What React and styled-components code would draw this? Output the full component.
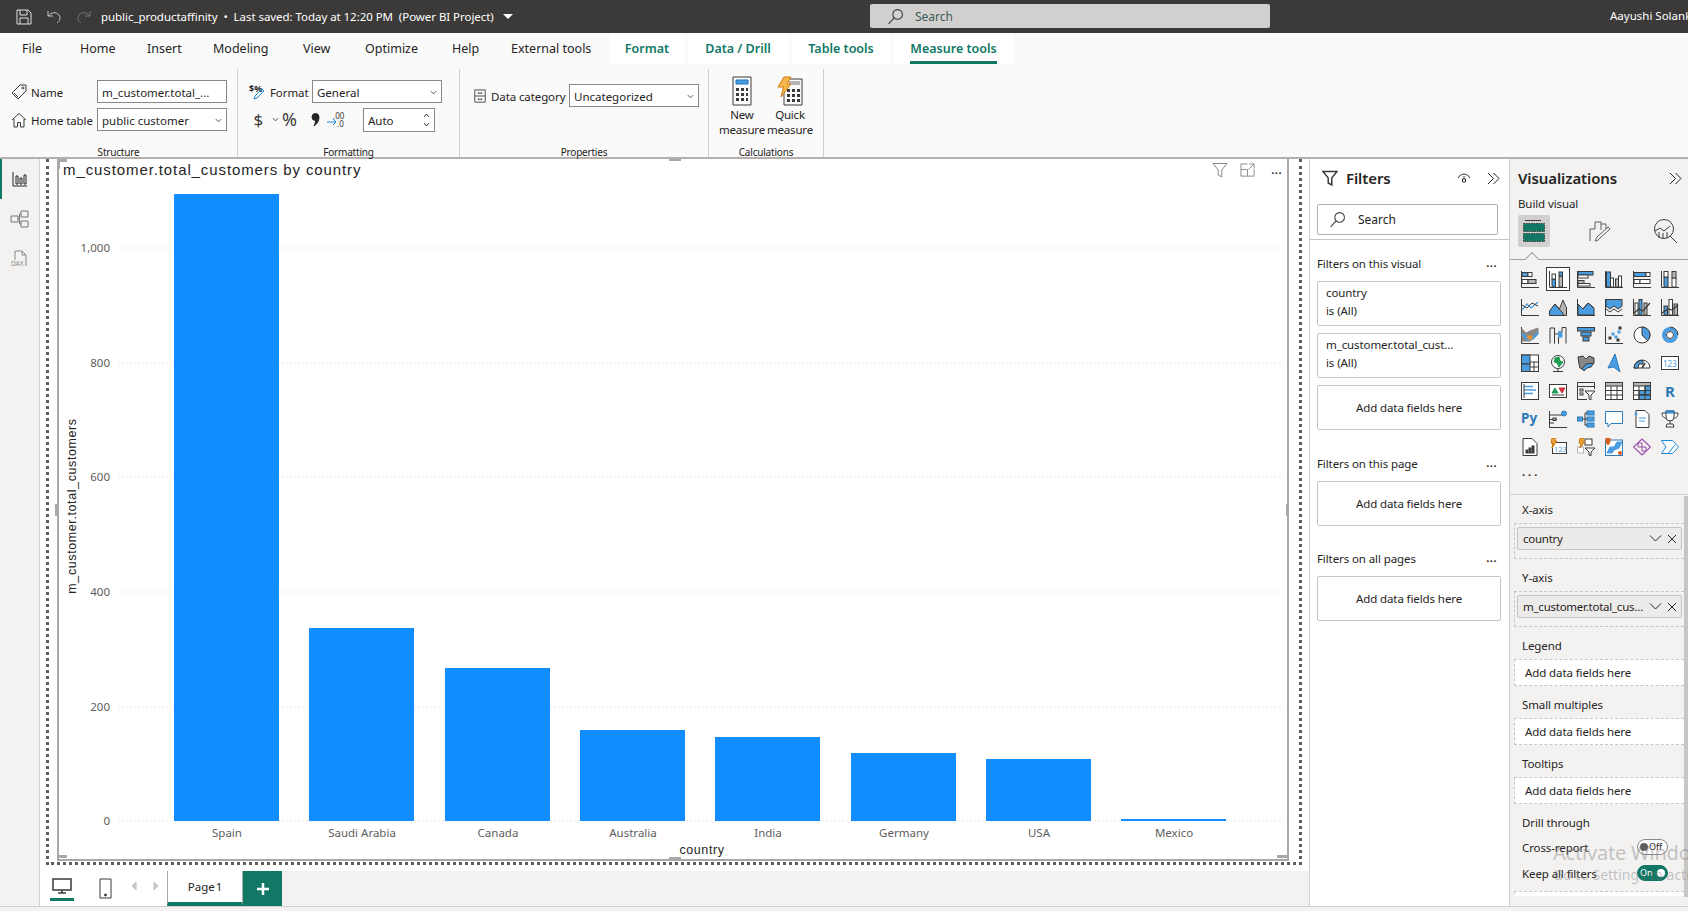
import React from 'react';
import styled, { createGlobalStyle } from 'styled-components';

const B = '#4a9de0';
const G = '#b8b6b4';
const D = '#3b3a39';
const GREEN = '#117865';
const FONT = '"Noto Sans", "Open Sans", sans-serif';

const GlobalStyle = createGlobalStyle`
  html, body { margin: 0; padding: 0; background: #fff; }
  * { box-sizing: border-box; }
  body { font-family: ${FONT}; font-size: 12px; color: #252423; }
`;

const Page = styled.div`
  position: relative;
  width: 1688px;
  height: 911px;
  overflow: hidden;
  display: flex;
  flex-direction: column;
`;

const TopBar = styled.div`
  height: 33px;
  flex: none;
  background: #3b3a39;
  color: #fff;
  display: flex;
  align-items: center;
  position: relative;
`;
const TopIcon = styled.span`
  display: flex;
  width: ${(p) => p.$w}px;
  padding-left: ${(p) => p.$pl}px;
`;
const DocTitle = styled.span`
  font-size: 11.5px;
  white-space: pre;
  letter-spacing: -0.05px;
`;
const Caret = styled.span`
  width: 0;
  height: 0;
  margin-left: 9px;
  border: 5px solid transparent;
  border-top-color: #fff;
  border-bottom-width: 0;
`;
const TopSearch = styled.div`
  position: absolute;
  left: 870px;
  top: 4px;
  width: 400px;
  height: 24px;
  border-radius: 2px;
  background: #d2d0ce;
  color: #3b5b55;
  display: flex;
  align-items: center;
  gap: 11px;
  padding-left: 17px;
`;
const UserName = styled.span`
  position: absolute;
  left: 1610px;
  top: 8px;
  font-size: 11.5px;
  white-space: nowrap;
`;

const TabsRow = styled.div`
  height: 31px;
  flex: none;
  background: #fafafa;
  display: flex;
  padding-left: 22px;
`;
const Tab = styled.div`
  width: ${(p) => p.$w}px;
  font-size: 12.5px;
  line-height: 31px;
  white-space: nowrap;
`;
const ContextTab = styled.div`
  width: ${(p) => p.$w}px;
  margin-right: 4px;
  height: 31px;
  background: #fff;
  color: ${GREEN};
  font-size: 12.5px;
  font-weight: 600;
  line-height: 31px;
  text-align: center;
  white-space: nowrap;
`;
const ActiveLabel = styled.span`
  display: inline-block;
  height: 31px;
  border-bottom: ${(p) => (p.$on ? `3px solid ${GREEN}` : 'none')};
`;

const Ribbon = styled.div`
  height: 95px;
  flex: none;
  background: #fafafa;
  border-bottom: 2px solid #b3b0ad;
  display: flex;
  padding-top: 5px;
`;
const Group = styled.div`
  width: ${(p) => p.$w}px;
  height: 88px;
  border-right: 1px solid #d2d0ce;
  display: flex;
  flex-direction: column;
`;
const GroupBody = styled.div`
  height: 78px;
  padding: ${(p) => p.$pad};
  display: flex;
  flex-direction: column;
  gap: 5px;
`;
const GroupLabel = styled.div`
  height: 10px;
  line-height: 10px;
  font-size: 10px;
  letter-spacing: -0.2px;
  text-align: center;
`;
const RibbonRow = styled.div`
  display: flex;
  align-items: center;
  height: ${(p) => p.$h || 23}px;
`;
const RowLabel = styled.span`
  width: ${(p) => p.$w}px;
  padding-top: 1px;
  font-size: 11.5px;
  letter-spacing: -0.1px;
  white-space: nowrap;
`;
const RowIcon = styled.span`
  display: flex;
  width: ${(p) => p.$w}px;
`;
const Field = styled.div`
  width: ${(p) => p.$w}px;
  height: ${(p) => p.$h || 23}px;
  background: #fff;
  border: 1px solid #8a8886;
  padding: 1px 4px 0;
  font-size: 11.5px;
  display: flex;
  align-items: center;
  justify-content: space-between;
  white-space: nowrap;
`;
const FormatGlyph = styled.span`
  width: ${(p) => p.$w}px;
  font-size: ${(p) => p.$size}px;
  color: #3b3a39;
  line-height: 23px;
`;
const CalcButton = styled.div`
  width: 48px;
  display: flex;
  flex-direction: column;
  align-items: center;
  font-size: 11.5px;
  line-height: 15px;
  letter-spacing: -0.2px;
  text-align: center;
`;
const CalcIcon = styled.span`
  display: flex;
  height: 30px;
  margin-bottom: 1px;
`;
const CalcRow = styled.div`
  display: flex;
  margin-left: 9px;
`;

const Main = styled.div`
  flex: 1;
  display: flex;
  min-height: 0;
`;
const Rail = styled.div`
  width: 40px;
  flex: none;
  background: #f3f2f1;
  border-right: 1px solid #d2d0ce;
  display: flex;
  flex-direction: column;
`;
const RailItem = styled.div`
  height: 40px;
  display: flex;
  align-items: center;
  justify-content: center;
  border-left: 2px solid ${(p) => (p.$on ? GREEN : 'transparent')};
  padding-right: 2px;
`;
const Center = styled.div`
  width: 1269px;
  flex: none;
  display: flex;
  flex-direction: column;
  background: #fff;
`;
const Canvas = styled.div`
  height: 712px;
  padding: 0 0 0 6px;
`;
const DottedFrame = styled.div`
  width: 1256px;
  height: 706px;
  border-left: 3px dotted #605e5c;
  border-right: 3px dotted #605e5c;
  border-bottom: 3px dotted #605e5c;
  padding-left: 8px;
`;
const Visual = styled.div`
  position: relative;
  width: 1232px;
  height: 702px;
  border-left: 2px solid #a8a8a8;
  border-right: 2px solid #a8a8a8;
  border-bottom: 2px solid #a8a8a8;
`;
const Chart = styled.svg`
  display: block;
  width: 1228px;
  height: 700px;
`;
const AxisText = styled.text`
  font-family: ${FONT};
  font-size: 11.5px;
  fill: #605e5c;
`;
const AxisTitle = styled.text`
  font-family: "Liberation Sans", sans-serif;
  font-size: 12.5px;
  letter-spacing: 0.6px;
  fill: #252423;
`;
const ChartTitle = styled.text`
  font-family: "Liberation Sans", sans-serif;
  font-size: 15px;
  letter-spacing: 0.9px;
  fill: #252423;
`;
const VisualActions = styled.div`
  position: absolute;
  top: 3px;
  right: 5px;
  display: flex;
  align-items: center;
  gap: 12px;
`;
const ActionDots = styled.span`
  margin-left: 4px;
  font-weight: 700;
  font-size: 11px;
  letter-spacing: 0.5px;
  line-height: 8px;
`;
const Handle = styled.span`
  position: absolute;
  background: #a8a8a8;
  left: ${(p) => p.$l}px;
  top: ${(p) => p.$t}px;
  width: ${(p) => p.$w}px;
  height: ${(p) => p.$h}px;
`;

const PageBar = styled.div`
  height: 35px;
  display: flex;
`;
const ViewSwitch = styled.div`
  width: 127px;
  display: flex;
  align-items: flex-start;
  padding: 5px 0 0 10px;
  position: relative;
  background: #fff;
`;
const ViewItem = styled.div`
  width: ${(p) => p.$w}px;
  height: 25px;
  display: flex;
  justify-content: ${(p) => (p.$center ? 'center' : 'flex-start')};
  border-bottom: ${(p) => (p.$on ? `3px solid ${GREEN}` : 'none')};
  padding-top: 2px;
  margin-right: ${(p) => p.$mr || 0}px;
`;
const PageTabs = styled.div`
  flex: 1;
  display: flex;
  background: #f3f2f1;
`;
const PageTab = styled.div`
  width: 76px;
  background: #fff;
  border-left: 1px solid #a8a8a8;
  border-right: 1px solid #a8a8a8;
  border-bottom: 4px solid ${GREEN};
  text-align: center;
  line-height: 32px;
  font-size: 11.5px;
  word-spacing: -2px;
`;
const AddTab = styled.div`
  width: 39px;
  background: ${GREEN};
  color: #fff;
  display: flex;
  align-items: center;
  justify-content: center;
`;

const FiltersPane = styled.div`
  width: 200px;
  flex: none;
  background: #fff;
  border-left: 1px solid #d2d0ce;
  display: flex;
  flex-direction: column;
`;
const PaneHeader = styled.div`
  height: 38px;
  flex: none;
  display: flex;
  align-items: center;
  padding: ${(p) => p.$pad};
`;
const PaneTitle = styled.span`
  flex: 1;
  margin-left: ${(p) => p.$ml || 0}px;
  font-size: 15px;
  font-weight: 600;
  letter-spacing: -0.1px;
  color: #252423;
`;
const HeaderGap = styled.span`
  width: 16px;
`;
const SearchBox = styled.div`
  margin: 7px 0 0 7px;
  width: 181px;
  height: 31px;
  border: 1px solid #b3b0ad;
  border-radius: 2px;
  display: flex;
  align-items: center;
  gap: 12px;
  padding-left: 11px;
  font-size: 12px;
`;
const PaneRule = styled.div`
  height: 1px;
  flex: none;
  margin-top: ${(p) => p.$mt}px;
  background: #c8c6c4;
`;
const FilterSection = styled.div`
  margin: ${(p) => p.$mt}px 7px 0;
  display: flex;
  flex-direction: column;
  gap: 7px;
`;
const SectionHead = styled.div`
  height: 16px;
  margin-bottom: 3px;
  display: flex;
  align-items: center;
  justify-content: space-between;
  font-size: 11.5px;
  letter-spacing: -0.1px;
  padding-right: 5px;
`;
const Dots = styled.span`
  font-weight: 700;
  font-size: 11px;
  letter-spacing: ${(p) => p.$spread || 0.5}px;
  line-height: 8px;
`;
const FilterCard = styled.div`
  width: 184px;
  height: 45px;
  border: 1px solid #c8c6c4;
  border-radius: 2px;
  padding: ${(p) => (p.$center ? '0' : '2px')} 8px;
  font-size: 11.5px;
  line-height: 18px;
  letter-spacing: -0.1px;
  display: flex;
  flex-direction: column;
  justify-content: ${(p) => (p.$center ? 'center' : 'flex-start')};
  text-align: ${(p) => (p.$center ? 'center' : 'left')};
`;

const VizPane = styled.div`
  flex: 1;
  min-width: 0;
  background: #f3f2f1;
  border-left: 1px solid #d2d0ce;
  display: flex;
  flex-direction: column;
  overflow: hidden;
`;
const BuildLabel = styled.div`
  height: 15px;
  margin: -1px 0 0 8px;
  line-height: 15px;
  font-size: 11.5px;
  letter-spacing: -0.1px;
`;
const BuildTabs = styled.div`
  height: 32px;
  margin: 4px 0 0 8px;
  display: flex;
  gap: 34px;
`;
const BuildTab = styled.div`
  width: 32px;
  height: 32px;
  display: flex;
  align-items: center;
  justify-content: center;
  border-radius: 2px;
  background: ${(p) => (p.$on ? '#d2d0ce' : 'transparent')};
`;
const NotchRule = styled.div`
  position: relative;
  height: 1px;
  margin-top: 12px;
  background: #a19f9d;
`;
const Notch = styled.span`
  position: absolute;
  left: 17px;
  top: -5px;
  width: 10px;
  height: 10px;
  background: #f3f2f1;
  border-left: 1px solid #a19f9d;
  border-top: 1px solid #a19f9d;
  transform: rotate(45deg);
`;
const VizGrid = styled.div`
  margin: 10px 0 0 11px;
  display: grid;
  grid-template-columns: repeat(6, 18px);
  grid-auto-rows: 18px;
  gap: 10px;
`;
const VizCell = styled.div`
  position: relative;
  display: flex;
  ${(p) => p.$on && `
    &::before {
      content: '';
      position: absolute;
      inset: -3px;
      border: 1px solid #3b3a39;
      background: #fff;
    }
    & > svg { position: relative; }
  `}
`;
const MoreRow = styled.div`
  height: 12px;
  margin: 10px 0 0 12px;
  display: flex;
  align-items: center;
  color: #252423;
`;
const Well = styled.div`
  margin-top: 16px;
  flex: 1;
  min-height: 0;
  display: flex;
  align-items: flex-start;
  border-top: 1px solid #d2d0ce;
`;
const WellBody = styled.div`
  flex: 1;
  min-width: 0;
  height: 401px;
  padding-top: 7px;
  overflow: hidden;
`;
const ScrollThumb = styled.div`
  width: 4px;
  height: 401px;
  margin-top: 1px;
  background: #c8c6c4;
`;
const FieldLabel = styled.div`
  height: 16px;
  line-height: 16px;
  margin: ${(p) => p.$mt || 0}px 0 0 12px;
  font-size: 11.5px;
  letter-spacing: -0.1px;
`;
const DropZone = styled.div`
  margin: ${(p) => (p.$mt === undefined ? 5 : p.$mt)}px 0 0 4px;
  height: ${(p) => (p.$filled ? 36 : 27)}px;
  border: 1px dashed #c8c6c4;
  border-right: none;
  background: ${(p) => (p.$filled ? 'transparent' : '#fff')};
  padding: ${(p) => (p.$filled ? '3px 2px' : '0 0 0 10px')};
  font-size: 11.5px;
  letter-spacing: -0.1px;
  line-height: 25px;
`;
const Pill = styled.div`
  height: 23px;
  background: #edebe9;
  border: 1px solid #c8c6c4;
  border-radius: 2px;
  display: flex;
  align-items: center;
  padding: 0 4px 0 5px;
  gap: 5px;
`;
const PillText = styled.span`
  flex: 1;
  min-width: 0;
  letter-spacing: -0.25px;
  overflow: hidden;
  text-overflow: ellipsis;
  white-space: nowrap;
`;
const SwitchRow = styled.div`
  height: 16px;
  margin: ${(p) => p.$mt}px 4px 0 12px;
  display: flex;
  align-items: center;
  justify-content: space-between;
  font-size: 11.5px;
  letter-spacing: -0.1px;
  padding-right: 12px;
`;
const Toggle = styled.div`
  width: 31px;
  height: 16px;
  border-radius: 8px;
  background: ${(p) => (p.$on ? GREEN : '#fff')};
  border: 1px solid ${(p) => (p.$on ? GREEN : '#8a8886')};
  color: ${(p) => (p.$on ? '#fff' : '#252423')};
  display: flex;
  align-items: center;
  justify-content: ${(p) => (p.$on ? 'space-between' : 'flex-start')};
  gap: 1px;
  padding: 0 2px;
  font-size: 9px;
  line-height: 10px;
`;
const Knob = styled.span`
  width: 8px;
  height: 8px;
  border-radius: 50%;
  flex: none;
  background: ${(p) => (p.$on ? '#fff' : '#605e5c')};
`;

const Status = styled.div`
  height: 5px;
  flex: none;
  background: #f3f2f1;
  border-top: 1px solid #d2d0ce;
`;
const Watermark = styled.div`
  position: absolute;
  left: 1553px;
  top: 840px;
  color: rgba(110, 110, 110, 0.38);
  white-space: nowrap;
  pointer-events: none;
`;
const WatermarkBig = styled.div`
  font-size: 20px;
  letter-spacing: -0.2px;
  line-height: 26px;
`;
const WatermarkSmall = styled.div`
  font-size: 14px;
  line-height: 18px;
`;

// small svg helper, every icon shares a stroke
const Svg = ({ s = 16, w, h, box = '0 0 16 16', c = '#3b3a39', sw = 1, children }) => (
  <svg width={w || s} height={h || s} viewBox={box} fill="none" stroke={c} strokeWidth={sw}>
    {children}
  </svg>
);

const SearchGlass = ({ c }) => (
  <Svg c={c} s={17}>
    <circle cx="10" cy="6" r="4.5" />
    <path d="M6.8 9.2 1.5 15" />
  </Svg>
);
const Funnel = ({ s = 16, c = '#3b3a39', sw = 1 }) => (
  <Svg s={s} c={c} sw={sw}>
    <path d="M1 1.5h14l-5.2 6.4V15l-3.6-2V7.9z" />
  </Svg>
);
const DoubleChevron = () => (
  <Svg s={13} box="0 0 13 13" c="#252423">
    <path d="M1 1l5.5 5.5L1 12M6.5 1 12 6.5 6.5 12" />
  </Svg>
);
const Chevron = ({ s = 7 }) => (
  <Svg s={s} box="0 0 8 8" c="#3b3a39">
    <path d="M1 2.5 4 5.5 7 2.5" />
  </Svg>
);
const Cross = () => (
  <Svg s={10} box="0 0 10 10" c="#252423">
    <path d="M1 1l8 8M9 1 1 9" />
  </Svg>
);
const DownLong = () => (
  <Svg s={13} box="0 0 13 13" c="#252423">
    <path d="M1 3.5 6.5 9 12 3.5" />
  </Svg>
);

const r = (x, y, w, h, f = B, s = D) => <rect x={x} y={y} width={w} height={h} fill={f} stroke={s} />;
const p = (d, f = 'none', s = D, w = 1) => <path d={d} fill={f} stroke={s} strokeWidth={w} />;
const AX = p('M.5 1V17.5H18');

const VIZ_ICONS = [
  <>{AX}{r(1, 2.5, 6, 4)}{r(7, 2.5, 4, 4, '#fff')}{r(1, 9.5, 6, 4, '#fff')}{r(7, 9.5, 8, 4, G)}</>,
  <>{AX}{r(3, 9, 3.5, 8)}{r(3, 4, 3.5, 5, '#fff')}{r(10, 6, 3.5, 11, G)}{r(10, 2, 3.5, 4, B)}</>,
  <>{AX}{r(1, 1.5, 15, 3.5, B)}{r(1, 5, 10, 3, '#fff')}{r(1, 10.5, 6, 3, G)}{r(1, 13.5, 12, 2.5, '#fff')}</>,
  <>{AX}{r(1.5, 2, 4, 15, B)}{r(5.5, 8, 3, 9, '#fff')}{r(10.5, 9, 3, 8, G)}{r(13.5, 6, 3, 11, '#fff')}</>,
  <>{AX}{r(1, 2.5, 12, 4)}{r(13, 2.5, 4, 4, '#fff')}{r(1, 9.5, 6, 4, '#fff')}{r(7, 9.5, 10, 4, '#fff')}</>,
  <>{AX}{r(3, 7, 4, 10)}{r(3, 1.5, 4, 5.5, '#fff')}{r(11, 8, 4, 9, '#fff')}{r(11, 1.5, 4, 6.5, G)}</>,
  <>{AX}{p('M1 12 6 6l4 4 7-6', 'none', B, 1.2)}{p('M1 7l5 3 5-5 6 3')}</>,
  <>{p('M1 17.5 1 13 6 6l4 6 4-10 3.5 8v7.5z', G)}{p('M.5 17.5V13L6 6l5 6 3 3v2.5z', B)}{p('M6 6l5 6', 'none')}</>,
  <>{AX}{p('M1 17V6l5 5 5-6 6 5v7z', B)}{p('M1 6l5 5 5-6 6 5', 'none', D)}</>,
  <>{AX}{p('M1 1.5h16V8l-4 3-4-3-4 3-4-3z', B)}{p('M1 11l4 3 4-3 4 3 4-3', 'none', D)}</>,
  <>{AX}{r(2, 5, 3, 12, '#fff')}{r(6, 1.5, 3, 15.5, B)}{r(11, 5, 3, 12, G)}{p('M1 15l5-4 4 2 7-8', 'none', D, 1.2)}</>,
  <>{AX}{r(3, 8, 3.5, 9, B)}{r(8, 1.5, 3.5, 15.5, '#fff')}{r(13, 6, 3.5, 11, G)}{p('M1 15l6-4 4 1 6-5', 'none', D, 1.2)}</>,
  <>{AX}{p('M1 3l4 4 4-2 8-3v6l-8 7H1z', '#8a8886', '#8a8886')}{p('M1 8l5 5h5l6-6', 'none', B, 2.5)}{r(7, 10, 4, 3, '#e8912d', '#e8912d')}</>,
  <>{p('M1 17.5V2h4.5v15.5M5.5 17.5V8h4v9.5M9.5 17.5V6h3.5V1.5h4v16')}{r(9.5, 6, 3.5, 5, B, B)}</>,
  <>{r(.5, 1.5, 17, 3.5, B)}{r(4, 6, 10, 4, B)}{r(6, 11, 6, 4, B)}</>,
  <>{AX}{r(4, 11, 2, 2, D, D)}{r(7, 7, 2, 2, B, B)}{r(10, 10, 2, 2, B, B)}{r(13, 5, 2, 2, B, B)}{r(14, 1, 2, 2, D, D)}{r(12, 13, 2, 2, D, D)}</>,
  <><circle cx="9" cy="9" r="8" fill="#fff" stroke={D} />{p('M9 1a8 8 0 0 1 8 8 8 8 0 0 1-2.5 5.8L9 9z', B)}</>,
  <><circle cx="9" cy="9" r="6" fill="none" stroke={B} strokeWidth="4" />{p('M9 1a8 8 0 0 1 8 8', 'none', D)}<circle cx="9" cy="9" r="3.5" fill="#fff" stroke={D} /></>,
  <>{r(.5, 1, 17, 16.5, '#fff')}{r(.5, 1, 8.5, 9, B)}{r(.5, 10, 8.5, 7.5, B)}{p('M9 8h8.5M13 8v9.5M9 13h8.5')}</>,
  <><circle cx="9" cy="8" r="6.5" fill="#fff" stroke={D} />{p('M6 4l4-1 1 4 3 1-4 5-2-4-3-1z', '#1f9d55', '#1f9d55')}{p('M4 17.5h10M9 15v2')}</>,
  <>{p('M1 3l5-1 3 3 3-3 5 2v5l-3 3-4 1-3 3-4-2-1-4z', '#8a8886')}{p('M9 10l8-1-3 4-4 1-3 3-2-2z', B)}</>,
  <>{p('M10 0 3 14l5-1 2 1 5 4z', B, '#2a7ab8')}</>,
  <>{p('M1 14a8 8 0 0 1 16 0z', '#fff')}{p('M1 14a8 8 0 0 1 9-7.5V10H6l-1 4z', B)}{p('M9 14l3-5', 'none', D, 1.6)}</>,
  <>{r(.5, 2.5, 17, 13, '#fff')}<text x="2" y="12.5" fontSize="8" fill={B} stroke="none" fontFamily={FONT}>123</text></>,
  <>{r(.5, .5, 17, 17, '#fff')}{p('M3 4.5h9M3 8h12M3 11.5h9', 'none', B, 1.4)}{p('M3 2v14', 'none', D)}</>,
  <>{r(.5, 2.5, 17, 13, '#fff')}{p('M3 11l3-5 3 5z', '#1f9d55', '#1f9d55')}{p('M10 6h6l-3 5z', '#d13438', '#d13438')}{p('M3 13h12', 'none', D)}</>,
  <>{p('M10 17.5H.5V.5h17V7M.5 4.5h17')}{r(3, 7, 3, 2, '#fff')}{r(3, 11, 3, 2, '#fff')}{p('M8 9h10l-4 4v5l-2-1v-4z', '#fff')}</>,
  <>{r(.5, .5, 17, 17, '#fff')}{r(.5, .5, 17, 3.5, G)}{p('M.5 8.5h17M.5 13h17M6 4v13.5M12 4v13.5')}</>,
  <>{r(.5, .5, 17, 17, '#fff')}{r(.5, .5, 17, 3.5, G)}{r(6, 8.5, 6, 4.5, B)}{r(12, 4, 5.5, 9, B)}{r(6, 13, 11.5, 4.5, B)}{p('M.5 8.5h17M.5 13h17M6 4v13.5M12 4v13.5')}</>,
  <><text x="4" y="15" fontSize="15" fontWeight="700" fill="#2a7ab8" stroke="none" fontFamily={FONT}>R</text></>,
  <><text x="0" y="13" fontSize="13.5" fontWeight="700" fill="#2a7ab8" stroke="none" fontFamily={FONT}>Py</text></>,
  <>{AX}{p('M1 5h12M1 9.5h7M1 13h4')}{r(4, 8, 3, 2.5, G)}<circle cx="15" cy="3.5" r="2.5" fill={B} stroke="#2a7ab8" /></>,
  <>{r(.5, 7, 5, 4, B, '#2a7ab8')}{r(10, 1, 7, 4, B, '#2a7ab8')}{r(10, 7, 7, 4, B, '#2a7ab8')}{r(10, 13, 7, 4, B, '#2a7ab8')}{p('M5.5 9H10M8 3v12.5M8 3h2M8 15h2')}</>,
  <>{p('M.5 1.5h17v12H6l-3 3.5v-3.5H.5z', '#fff', '#2a7ab8')}</>,
  <>{p('M3 .5h9l4 4v13H3z', '#fff')}{p('M6 8h7M6 11h6', 'none', B, 1.2)}<circle cx="3" cy="4" r="1.5" fill={B} stroke="none" /></>,
  <>{p('M5 1h8v6a4 4 0 0 1-8 0zM5 3H1c0 4 2 5 4 5M13 3h4c0 4-2 5-4 5M9 11v3M5 17h8l-1-3H6z', '#fff')}{r(5, 1, 8, 2, B, '#2a7ab8')}</>,
  <>{p('M2 .5h9l5 5v12H2z', '#fff')}{r(5, 12, 2, 3, D, D)}{r(8, 10, 2, 5, D, D)}{r(11, 8, 2, 7, D, D)}</>,
  <>{r(3.5, 4.5, 14, 11, '#fff')}<text x="5" y="13.5" fontSize="7.5" fill={B} stroke="none" fontFamily={FONT}>123</text>{p('M3 0h4L5 3h3l-5 7 1-5H2z', '#f2a43a', '#c87a10')}</>,
  <>{r(.5, 9, 6, 6, '#fff', G)}{r(8, 1, 7, 6, '#fff')}{p('M8 10h10l-4 4v4l-2-1v-3z', '#fff')}{p('M3 0h4L5 3h3l-5 7 1-5H2z', '#f2a43a', '#c87a10')}</>,
  <>{r(.5, 2, 17, 15.5, '#fff', '#2a7ab8')}{p('M2 15l3-6h4l3-5h5l-3 6-5 2-2 3z', B, B)}{p('M1 0h4v4L3 7 1 4z', '#d9601a', '#d9601a')}<circle cx="15" cy="15" r="2" fill="#d9601a" stroke="none" /></>,
  <>{p('M9 1 17.5 9 9 17 .5 9z', 'none', '#9a4fb0', 1.2)}{p('M5 5h4v4H5zM9 9h4v4H9z', 'none', '#9a4fb0', 1)}</>,
  <>{p('M.5 2.5h11L17.5 9 11.5 15.5H.5L5 9z', '#fff', '#1e88d8')}{p('M7 15.5 14 7', 'none', '#1e88d8')}</>,
];

const COUNTRIES = [
  ['Spain', 174, 194],
  ['Saudi Arabia', 309, 628],
  ['Canada', 445, 668],
  ['Australia', 580, 730],
  ['India', 715, 737],
  ['Germany', 851, 753],
  ['USA', 986, 759],
  ['Mexico', 1121, 819],
];
const BASE = 821;
const TICKS = [['1,000', 248], ['800', 363], ['600', 477], ['400', 592], ['200', 707], ['0', BASE]];

const BarChart = () => (
  <Chart viewBox="59 159 1228 700">
    <ChartTitle x="63" y="175">m_customer.total_customers by country</ChartTitle>
    {TICKS.map(([label, y]) => (
      <g key={label}>
        <line x1="119" x2="1285" y1={y} y2={y} stroke="#d9d7d5" strokeDasharray="1 3" />
        <AxisText x="110" y={y + 4} textAnchor="end">{label}</AxisText>
      </g>
    ))}
    {COUNTRIES.map(([name, x, top]) => (
      <g key={name}>
        <rect x={x} y={top} width="105" height={BASE - top} fill="#118dff" />
        <AxisText x={x + 53} y="837" textAnchor="middle">{name}</AxisText>
      </g>
    ))}
    <AxisTitle x="702" y="854" textAnchor="middle">country</AxisTitle>
    <AxisTitle transform="translate(76 506) rotate(-90)" textAnchor="middle">m_customer.total_customers</AxisTitle>
  </Chart>
);

const FIELD_SLOTS = ['Legend', 'Small multiples', 'Tooltips'];

const App = () => (
  <Page>
    <GlobalStyle />
    <TopBar>
      <TopIcon $w={46} $pl={16}>
        <Svg c="#e1dfdd"><path d="M1 1h11l3 3v11H1zM4 1v5h7V1M4 15V9h8v6" /></Svg>
      </TopIcon>
      <TopIcon $w={30} $pl={0}>
        <Svg c="#c8c6c4"><path d="M2 2v5h5M2.5 7C5 3 10 2.5 13 6c2 3 1 6-2 8" /></Svg>
      </TopIcon>
      <TopIcon $w={25} $pl={0}>
        <Svg c="#797775"><path d="M14 2v5H9M13.5 7C11 3 6 2.5 3 6c-2 3-1 6 2 8" /></Svg>
      </TopIcon>
      <DocTitle>public_productaffinity  •  Last saved: Today at 12:20 PM  (Power BI Project)</DocTitle>
      <Caret />
      <TopSearch><SearchGlass c="#3b3a39" />Search</TopSearch>
      <UserName>Aayushi Solanki</UserName>
    </TopBar>

    <TabsRow>
      <Tab $w={58}>File</Tab>
      <Tab $w={67}>Home</Tab>
      <Tab $w={66}>Insert</Tab>
      <Tab $w={90}>Modeling</Tab>
      <Tab $w={62}>View</Tab>
      <Tab $w={87}>Optimize</Tab>
      <Tab $w={59}>Help</Tab>
      <Tab $w={99}>External tools</Tab>
      <ContextTab $w={74}>Format</ContextTab>
      <ContextTab $w={100}>Data / Drill</ContextTab>
      <ContextTab $w={98}>Table tools</ContextTab>
      <ContextTab $w={119}><ActiveLabel $on>Measure tools</ActiveLabel></ContextTab>
    </TabsRow>

    <Ribbon>
      <Group $w={238}>
        <GroupBody $pad="11px 0 0 11px">
          <RibbonRow>
            <RowIcon $w={20}>
              <Svg><path d="M1 9 9 1h6v6l-8 8zM3 9l4 4" /><circle cx="12" cy="4" r="1" /></Svg>
            </RowIcon>
            <RowLabel $w={66}>Name</RowLabel>
            <Field $w={130}>m_customer.total_...</Field>
          </RibbonRow>
          <RibbonRow>
            <RowIcon $w={20}>
              <Svg><path d="M1 8l7-6.5L15 8M3 7v8h3.5v-4.5h3V15H13V7" /></Svg>
            </RowIcon>
            <RowLabel $w={66}>Home table</RowLabel>
            <Field $w={130}>public customer<Chevron /></Field>
          </RibbonRow>
        </GroupBody>
        <GroupLabel>Structure</GroupLabel>
      </Group>

      <Group $w={222}>
        <GroupBody $pad="11px 0 0 11px">
          <RibbonRow>
            <RowIcon $w={21}>
              <Svg s={18} box="0 0 18 18">
                <text x="0" y="9" fontSize="9" fontWeight="700" fill="#252423" stroke="none" fontFamily={FONT}>$%</text>
                <path d="M5 16l1-3 7-7 2 2-7 7z" stroke="#1e88d8" />
              </Svg>
            </RowIcon>
            <RowLabel $w={42}>Format</RowLabel>
            <Field $w={130}>General<Chevron /></Field>
          </RibbonRow>
          <RibbonRow>
            <FormatGlyph $w={23} $size={17}>&nbsp;$</FormatGlyph>
            <RowIcon $w={10}><Chevron /></RowIcon>
            <FormatGlyph $w={29} $size={18}>%</FormatGlyph>
            <RowIcon $w={16}>
              <Svg w={9} h={14} box="0 0 9 14" c="#252423">
                <path d="M1 4a3.5 3.5 0 1 1 7 0c0 4-2 7-5 9 1-2 1.5-3.5 1.5-5.5A3.5 3.5 0 0 1 1 4z" fill="#252423" />
              </Svg>
            </RowIcon>
            <RowIcon $w={36}>
              <Svg s={18} box="0 0 18 18">
                <text x="6" y="8" fontSize="8" fill="#3b3a39" stroke="none" fontFamily={FONT}>.00</text>
                <text x="10" y="16" fontSize="8" fill="#3b3a39" stroke="none" fontFamily={FONT}>.0</text>
                <path d="M0 11h9M6 8l3 3-3 3" stroke="#1e88d8" />
              </Svg>
            </RowIcon>
            <Field $w={72} $h={24}>
              Auto
              <Svg s={9} w={7} h={18} box="0 0 7 18"><path d="M1 6l2.5-3L6 6M1 12l2.5 3L6 12" /></Svg>
            </Field>
          </RibbonRow>
        </GroupBody>
        <GroupLabel>Formatting</GroupLabel>
      </Group>

      <Group $w={249}>
        <GroupBody $pad="15px 0 0 13px">
          <RibbonRow>
            <RowIcon $w={18}>
              <Svg s={14} box="0 0 14 16"><path d="M1 1h12v14H1zM1 8h12M5 3.5V5h4V3.5M5 10.5V12h4v-1.5" /></Svg>
            </RowIcon>
            <RowLabel $w={78}>Data category</RowLabel>
            <Field $w={130}>Uncategorized<Chevron /></Field>
          </RibbonRow>
        </GroupBody>
        <GroupLabel>Properties</GroupLabel>
      </Group>

      <Group $w={115}>
        <GroupBody $pad="7px 0 0 0">
          <CalcRow>
            <CalcButton>
              <CalcIcon>
                <Svg w={20} h={30} box="0 0 20 30">
                  <path d="M1 1h18v28H1z" />
                  <path d="M4 4h12v4H4z" fill={B} stroke="#1e6fb5" />
                  <path d="M4 12h3v3H4zM9 12h3v3H9zM14 12h2v3h-2zM4 17h3v3H4zM9 17h3v3H9zM14 17h2v3h-2zM4 22h3v3H4zM9 22h3v3H9zM14 22h2v3h-2z" fill="#3b3a39" stroke="none" />
                </Svg>
              </CalcIcon>
              New<br />measure
            </CalcButton>
            <CalcButton>
              <CalcIcon>
                <Svg w={26} h={30} box="0 0 26 30">
                  <path d="M7 3h18v26H7z" />
                  <path d="M12 5h11v4H12z" fill={G} stroke="none" />
                  <path d="M10 13h3v3h-3zM15 13h3v3h-3zM20 13h3v3h-3zM10 18h3v3h-3zM15 18h3v3h-3zM20 18h3v3h-3zM10 23h3v3h-3zM15 23h3v3h-3zM20 23h3v3h-3z" fill="#3b3a39" stroke="none" />
                  <path d="M7 1h7l-4 7h4L4 21l2.5-10H1z" fill="#f7b84b" stroke="#d07a10" />
                </Svg>
              </CalcIcon>
              Quick<br />measure
            </CalcButton>
          </CalcRow>
        </GroupBody>
        <GroupLabel>Calculations</GroupLabel>
      </Group>
    </Ribbon>

    <Main>
      <Rail>
        <RailItem $on>
          <Svg s={16} c="#252423"><path d="M1 1v14h14M4 5h2v8H4zM8 7h2v6H8zM12 4h2v9h-2z" /></Svg>
        </RailItem>
        <RailItem>
          <Svg s={20} box="0 0 20 20" c="#797775"><path d="M1 7h7v6H1zM11 2h7v6h-7zM11 12h7v6h-7zM8 10h1.5M9.5 5v10M9.5 5H11M9.5 15H11" /></Svg>
        </RailItem>
        <RailItem>
          <Svg s={18} box="0 0 18 18" c="#8a8886">
            <path d="M4 10V1h7l4 4v11M11 1v4h4" />
            <text x="0" y="16" fontSize="6.5" fill="#8a8886" stroke="none" fontFamily={FONT}>DAX</text>
          </Svg>
        </RailItem>
      </Rail>

      <Center>
        <Canvas>
          <DottedFrame>
            <Visual>
              <BarChart />
              <VisualActions>
                <Funnel c="#8a8886" />
                <Svg s={15} c="#8a8886"><path d="M8 1H1v13h14V7M1 7h7v7M10 1h5v5M15 1 9 7" /></Svg>
                <ActionDots>...</ActionDots>
              </VisualActions>
              <Handle $l={-2} $t={0} $w={10} $h={3} />
              <Handle $l={-2} $t={0} $w={3} $h={10} />
              <Handle $l={-2} $t={696} $w={10} $h={3} />
              <Handle $l={610} $t={0} $w={12} $h={2} />
              <Handle $l={610} $t={698} $w={12} $h={2} />
              <Handle $l={-4} $t={345} $w={3} $h={12} />
              <Handle $l={1227} $t={345} $w={3} $h={12} />
              <Handle $l={1218} $t={696} $w={10} $h={3} />
            </Visual>
          </DottedFrame>
        </Canvas>
        <PageBar>
          <ViewSwitch>
            <ViewItem $w={24} $mr={25} $center $on>
              <Svg w={20} h={16} box="0 0 20 16"><path d="M1 1h18v11H1zM6 15h8M10 12v3" strokeWidth="1.5" /></Svg>
            </ViewItem>
            <ViewItem $w={14} $mr={15}>
              <Svg w={13} h={21} box="0 0 13 21"><path d="M1 1h11v19H1z" /><circle cx="6.5" cy="17" r="1" fill="#3b3a39" /></Svg>
            </ViewItem>
            <ViewItem $w={36}>
              <Svg w={36} h={16} box="0 0 36 16" c="#c8c6c4">
                <path d="M8 4v8L4 8zM26 4v8l4-4z" fill="#c8c6c4" />
              </Svg>
            </ViewItem>
          </ViewSwitch>
          <PageTabs>
            <PageTab>Page 1</PageTab>
            <AddTab>
              <Svg s={12} box="0 0 12 12" c="#fff" sw={2.5}><path d="M6 0v12M0 6h12" /></Svg>
            </AddTab>
          </PageTabs>
        </PageBar>
      </Center>

      <FiltersPane>
        <PaneHeader $pad="0 9px 0 12px">
          <Funnel sw={1.5} />
          <PaneTitle $ml={8}>Filters</PaneTitle>
          <Svg s={14} box="0 0 14 14"><path d="M1 7a6.5 6.5 0 0 1 12 0M5.5 8h3v3h-3zM7 5v3" /></Svg>
          <HeaderGap />
          <DoubleChevron />
        </PaneHeader>
        <SearchBox><SearchGlass />Search</SearchBox>
        <PaneRule $mt={4} />
        <FilterSection $mt={15}>
          <SectionHead>Filters on this visual<Dots>...</Dots></SectionHead>
          <FilterCard>country<br />is (All)</FilterCard>
          <FilterCard>m_customer.total_cust...<br />is (All)</FilterCard>
          <FilterCard $center>Add data fields here</FilterCard>
        </FilterSection>
        <FilterSection $mt={25}>
          <SectionHead>Filters on this page<Dots>...</Dots></SectionHead>
          <FilterCard $center>Add data fields here</FilterCard>
        </FilterSection>
        <FilterSection $mt={24}>
          <SectionHead>Filters on all pages<Dots>...</Dots></SectionHead>
          <FilterCard $center>Add data fields here</FilterCard>
        </FilterSection>
      </FiltersPane>

      <VizPane>
        <PaneHeader $pad="0 6px 0 8px">
          <PaneTitle>Visualizations</PaneTitle>
          <DoubleChevron />
        </PaneHeader>
        <BuildLabel>Build visual</BuildLabel>
        <BuildTabs>
          <BuildTab $on>
            <Svg s={24} box="0 0 24 24">
              <path d="M3 1.5h16" />
              <path d="M1.5 4.5h21v8h-21zM1.5 14.5h21v8h-21z" fill={GREEN} strokeDasharray="1.5 1" />
            </Svg>
          </BuildTab>
          <BuildTab>
            <Svg s={24} box="0 0 24 24" c="#605e5c">
              <path d="M2 22V10h5V3h6v8M13 5h5v5" />
              <path d="M22 10 12 19c-1 2-3 3-5 3 1-1 1-3 2-4l11-10z" />
            </Svg>
          </BuildTab>
          <BuildTab>
            <Svg s={26} box="0 0 26 26">
              <circle cx="11" cy="11" r="9.5" />
              <path d="M2 13l5-3 4 3 6-5M17 18l7 7" />
              <path d="M6 14v6M10 15v5M14 14v6" />
            </Svg>
          </BuildTab>
        </BuildTabs>
        <NotchRule><Notch /></NotchRule>
        <VizGrid>
          {VIZ_ICONS.map((icon, i) => (
            <VizCell key={i} $on={i === 1}>
              <svg width="18" height="18" viewBox="0 0 18 18">{icon}</svg>
            </VizCell>
          ))}
        </VizGrid>
        <MoreRow><Dots $spread={3}>...</Dots></MoreRow>
        <Well>
          <WellBody>
            <FieldLabel>X-axis</FieldLabel>
            <DropZone $filled>
              <Pill><PillText>country</PillText><DownLong /><Cross /></Pill>
            </DropZone>
            <FieldLabel $mt={11}>Y-axis</FieldLabel>
            <DropZone $filled>
              <Pill><PillText>m_customer.total_customers</PillText><DownLong /><Cross /></Pill>
            </DropZone>
            {FIELD_SLOTS.map((label) => (
              <React.Fragment key={label}>
                <FieldLabel $mt={11}>{label}</FieldLabel>
                <DropZone>Add data fields here</DropZone>
              </React.Fragment>
            ))}
            <FieldLabel $mt={11}>Drill through</FieldLabel>
            <SwitchRow $mt={8}>
              Cross-report
              <Toggle><Knob />Off</Toggle>
            </SwitchRow>
            <SwitchRow $mt={10}>
              Keep all filters
              <Toggle $on>On<Knob $on /></Toggle>
            </SwitchRow>
            <DropZone $mt={10} />
          </WellBody>
          <ScrollThumb />
        </Well>
      </VizPane>
    </Main>
    <Status />

    <Watermark>
      <WatermarkBig>Activate Windows</WatermarkBig>
      <WatermarkSmall>Go to Settings to activate Windows.</WatermarkSmall>
    </Watermark>
  </Page>
);

export default App;
